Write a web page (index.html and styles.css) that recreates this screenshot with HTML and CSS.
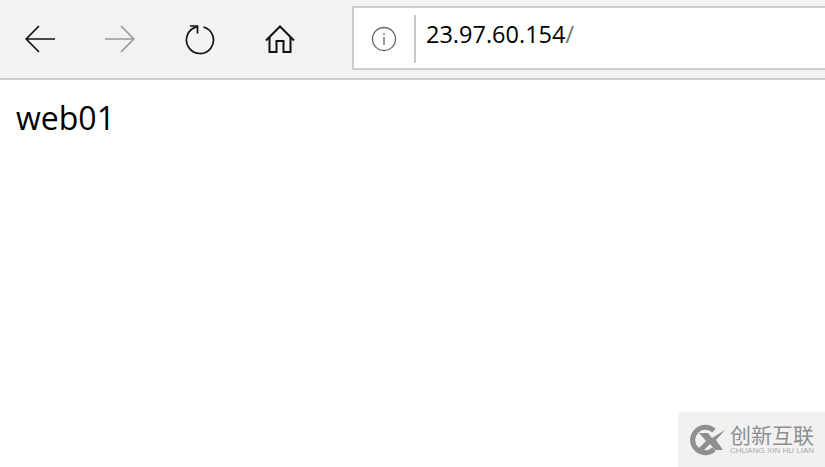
FILE: index.html
```html
<!DOCTYPE html>
<html lang="en">
  <head>
    <meta charset="UTF-8" />
    <title>web01</title>
    <link rel="stylesheet" href="styles.css">
  </head>
  <body>
    <div class="toolbar">
      <div class="nav-btn">
        <svg width="30" height="28" viewBox="0 0 30 28" fill="none" stroke="#111" stroke-width="1.7"><path d="M1.500 14H30M14 1 1.200 14 14 27"/></svg>
      </div>
      <div class="nav-btn">
        <svg width="30" height="28" viewBox="0 0 30 28" fill="none" stroke="#9a9a9a" stroke-width="1.7"><path d="M0 14H28.500M16 1 28.800 14 16 27"/></svg>
      </div>
      <div class="nav-btn">
        <svg width="30" height="32" viewBox="0 0 30 32" fill="none" stroke="#111" stroke-width="1.7"><path d="M18.500 4A13.500 13.500 0 1 1 11.800 3.900"/><path d="M5 3H12.500V10.500"/></svg>
      </div>
      <div class="nav-btn">
        <svg width="32" height="30" viewBox="0 0 32 30" fill="none" stroke="#111" stroke-width="2"><path d="M2 16.500 16 2.500 30 16.500"/><path d="M5.500 13V28H12.500V17H19.500V28H26.500V13"/></svg>
      </div>
      <div class="address-bar">
        <div class="site-info">
          <svg width="26" height="26" viewBox="0 0 26 26" fill="none" stroke="#666" stroke-width="1.300"><circle cx="13" cy="13" r="11.500"/><path d="M13 11V19M13 7V8.800"/></svg>
        </div>
        <div class="url"><span class="host">23.97.60.154</span><span class="path">/</span></div>
      </div>
    </div>

    <p class="page-text">web01</p>

    <div class="watermark">
      <svg width="36" height="32" viewBox="0 0 36 32"><path d="M24 6.700A12.700 12.700 0 1 0 24 25.300" fill="none" stroke="#8f8f8f" stroke-width="5"/><path d="M9 9H18L22 14 35 6 26 16 33 26H25L20 20 14 26H7L16 17Z" fill="#8f8f8f"/></svg>
      <div class="watermark-text">
        <div class="brand-cn">创新互联</div>
        <div class="brand-en">CHUANG XIN HU LIAN</div>
      </div>
    </div>
  </body>
</html>
```

FILE: styles.css
```css
/* Global styles */
body {
  margin: 0;
  height: 467px;
  overflow: hidden;
  background-color: #ffffff;
  color: #000000;
  font-family: "Open Sans", "Noto Sans", sans-serif;
}

/* Browser toolbar */
.toolbar {
  display: flex;
  align-items: center;
  height: 78px;
  background-color: #f2f2f2;
  border-bottom: 2px solid #cccccc;
}

.nav-btn {
  display: flex;
  justify-content: center;
  align-items: center;
  width: 80px;
  height: 76px;
}

.address-bar {
  display: flex;
  align-items: center;
  flex: 1;
  height: 60px;
  margin-left: 32px;
  margin-bottom: 2px;
  background-color: #ffffff;
  border: 2px solid #cccccc;
  border-right: none;
}

.site-info {
  display: flex;
  justify-content: center;
  align-items: center;
  width: 60px;
  height: 48px;
  margin-top: 2px;
  border-right: 2px solid #c8c8c8;
}

.url {
  padding-left: 10px;
  padding-bottom: 8px;
  font-size: 23.500px;
}

.path {
  color: #777777;
}

/* Page content */
.page-text {
  margin: 16px 0 0 16px;
  font-size: 32px;
  line-height: 44px;
}

/* Watermark in the corner */
.watermark {
  position: absolute;
  right: 0;
  bottom: 0;
  display: flex;
  align-items: center;
  gap: 4px;
  box-sizing: border-box;
  width: 147px;
  height: 55px;
  padding-left: 12px;
  background-color: #f1f1f1;
}

.brand-cn {
  font-family: "Noto Sans CJK SC", sans-serif;
  font-size: 21px;
  line-height: 21px;
  color: #8f8f8f;
}

.brand-en {
  margin-top: 2px;
  font-family: "Liberation Sans", sans-serif;
  font-size: 8px;
  line-height: 8px;
  color: #aaaaaa;
  white-space: nowrap;
}
```
